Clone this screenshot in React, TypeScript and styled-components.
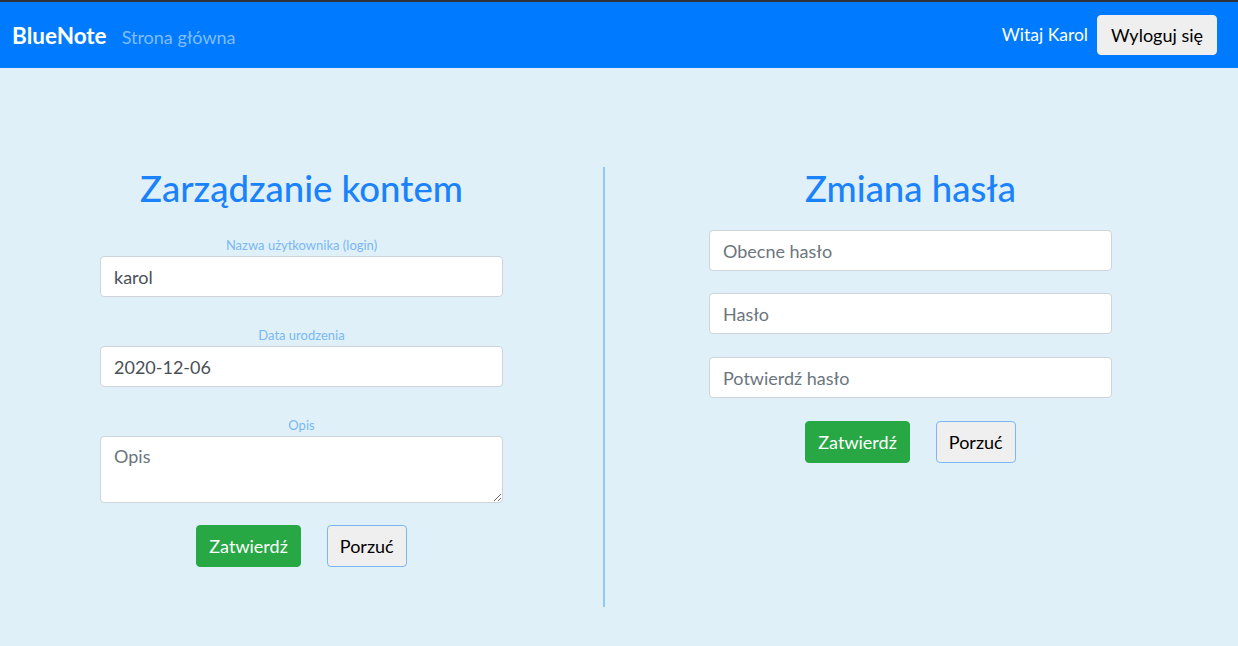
import React from "react";
import styled, { createGlobalStyle } from "styled-components";

const Global = createGlobalStyle`
  html, body { margin: 0; padding: 0; }
  body {
    background: #dff0f9;
    font-family: Lato, "Noto Sans", sans-serif;
    width: 1238px;
    height: 646px;
    overflow: hidden;
  }
  * { box-sizing: border-box; }
`;

const Navbar = styled.nav`
  height: 68px;
  border-top: 2px solid #2f3236;
  background: #007bff;
  display: flex;
  align-items: center;
  padding: 0 21px 0 12px;
`;

const Brand = styled.span`
  color: #fff;
  font-weight: 700;
  font-size: 22.5px;
  margin-right: 15px;
`;

const NavLink = styled.span`
  color: #80bdff;
  font-size: 18px;
  margin-top: 3px;
`;

const Spacer = styled.div`
  flex: 1;
`;

const Greeting = styled.span`
  color: #fff;
  font-size: 17.5px;
  margin-right: 9px;
  margin-top: -2px;
`;

const GrayButton = styled.button<{ $outline?: boolean }>`
  font-family: inherit;
  font-size: 18px;
  color: #000;
  background: #efefef;
  border: 1px solid ${(p) => (p.$outline ? "#7ab8f5" : "#efefef")};
  border-radius: 4px;
  height: ${(p) => (p.$outline ? "42px" : "40px")};
  padding: 0 ${(p) => (p.$outline ? "12px" : "13px")};
  cursor: pointer;
`;

const Main = styled.main`
  display: grid;
  grid-template-columns: 603px 2px 611px;
  padding-top: 96px;
`;

const Column = styled.section<{ $gap: number }>`
  display: flex;
  flex-direction: column;
  align-items: center;
  & > h1 {
    margin-bottom: ${(p) => p.$gap}px;
  }
`;

const Divider = styled.div`
  width: 2px;
  height: 440px;
  margin-top: 3px;
  background: #90c8f8;
`;

const Title = styled.h1`
  margin: 0;
  font-size: 36.5px;
  line-height: 48px;
  font-weight: 500;
  color: #1a82fb;
`;

const Field = styled.div<{ $mb: number }>`
  display: flex;
  flex-direction: column;
  align-items: center;
  width: 403px;
  margin-bottom: ${(p) => p.$mb}px;
`;

const Label = styled.label`
  font-size: 13px;
  line-height: 20px;
  color: #7ab8f5;
  margin-bottom: 1px;
`;

const Input = styled.input`
  width: 403px;
  height: 41px;
  border: 1px solid #ced4da;
  border-radius: 4px;
  background: #fff;
  padding: 0 13px;
  font-family: inherit;
  font-size: 18px;
  color: #495057;
  &::placeholder {
    color: #6c757d;
  }
`;

const TextArea = styled.textarea`
  width: 403px;
  height: 67px;
  border: 1px solid #ced4da;
  border-radius: 4px;
  background: #fff;
  padding: 8px 13px;
  font-family: inherit;
  font-size: 18px;
  color: #495057;
  resize: vertical;
  &::placeholder {
    color: #6c757d;
  }
`;

const Buttons = styled.div`
  display: flex;
  gap: 26px;
`;

const GreenButton = styled.button`
  font-family: inherit;
  font-size: 18px;
  color: #fff;
  background: #28a745;
  border: 1px solid #28a745;
  border-radius: 4px;
  height: 42px;
  padding: 0 12px;
  cursor: pointer;
`;

export default function App() {
  return (
    <>
      <Global />
      <Navbar>
        <Brand>BlueNote</Brand>
        <NavLink>Strona główna</NavLink>
        <Spacer />
        <Greeting>Witaj Karol</Greeting>
        <GrayButton>Wyloguj się</GrayButton>
      </Navbar>
      <Main>
        <Column $gap={23}>
          <Title>Zarządzanie kontem</Title>
          <Field $mb={28}>
            <Label>Nazwa użytkownika (login)</Label>
            <Input defaultValue="karol" />
          </Field>
          <Field $mb={28}>
            <Label>Data urodzenia</Label>
            <Input defaultValue="2020-12-06" />
          </Field>
          <Field $mb={22}>
            <Label>Opis</Label>
            <TextArea placeholder="Opis" />
          </Field>
          <Buttons>
            <GreenButton>Zatwierdź</GreenButton>
            <GrayButton $outline>Porzuć</GrayButton>
          </Buttons>
        </Column>
        <Divider />
        <Column $gap={18}>
          <Title>Zmiana hasła</Title>
          <Field $mb={22}>
            <Input placeholder="Obecne hasło" type="password" />
          </Field>
          <Field $mb={23}>
            <Input placeholder="Hasło" type="password" />
          </Field>
          <Field $mb={23}>
            <Input placeholder="Potwierdź hasło" type="password" />
          </Field>
          <Buttons>
            <GreenButton>Zatwierdź</GreenButton>
            <GrayButton $outline>Porzuć</GrayButton>
          </Buttons>
        </Column>
      </Main>
    </>
  );
}
